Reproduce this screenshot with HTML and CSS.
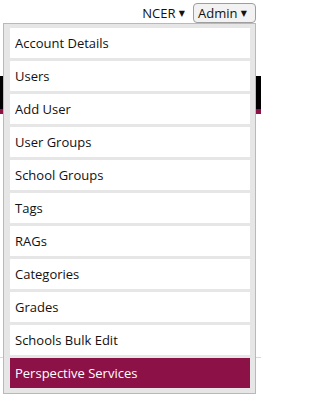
FILE: index.html
```html
<!DOCTYPE html>
<html>
<head>
<meta charset="utf-8">
<link rel="stylesheet" href="styles.css">
</head>
<body>
<div class="page">
  <div class="topnav">
    <span class="org">NCER <span class="caret">▼</span></span>
    <div class="admin-wrap">
      <span class="admin-btn">Admin <span class="caret">▼</span></span>
      <ul class="menu">
        <li class="item">Account Details</li>
        <li class="item">Users</li>
        <li class="item">Add User</li>
        <li class="item">User Groups</li>
        <li class="item">School Groups</li>
        <li class="item">Tags</li>
        <li class="item">RAGs</li>
        <li class="item">Categories</li>
        <li class="item">Grades</li>
        <li class="item">Schools Bulk Edit</li>
        <li class="item active">Perspective Services</li>
      </ul>
    </div>
  </div>
  <div class="header-bar"></div>
  <div class="header-stripe"></div>
  <div class="content"></div>
  <div class="rule"></div>
</div>
</body>
</html>
```

FILE: styles.css
```css
html, body {
  margin: 0;
  padding: 0;
  background: #fff;
}
body {
  font-family: "Open Sans", "DejaVu Sans", sans-serif;
  font-size: 13px;
  color: #111;
}
.page {
  position: relative;
  width: 261px;
  height: 398px;
  overflow: hidden;
}
.topnav {
  display: flex;
  justify-content: flex-end;
  align-items: flex-start;
  height: 76px;
  padding-right: 5px;
  box-sizing: border-box;
}
.org {
  margin-top: 4px;
  margin-right: 8px;
  line-height: 18px;
}
.caret {
  font-size: 8px;
  vertical-align: 2px;
}
.admin-btn {
  display: block;
  margin-top: 3px;
  height: 18px;
  line-height: 18px;
  padding: 0 8px 0 4px;
  border: 1px solid #9e9e9e;
  border-radius: 4px;
  background: #f2f2f2;
}
.menu {
  position: absolute;
  left: 3px;
  top: 23px;
  width: 253px;
  box-sizing: border-box;
  margin: 0;
  list-style: none;
  padding: 4px 5px 5px 6px;
  border: 1px solid #b9b9b9;
  background: #e6e6e6;
  display: flex;
  flex-direction: column;
  gap: 3px;
  z-index: 2;
}
.item {
  height: 30px;
  display: flex;
  align-items: center;
  padding-left: 5px;
  background: #fff;
}
.item.active {
  background: #8c1147;
  color: #fff;
}
.header-bar {
  height: 33px;
  background: #000;
}
.header-stripe {
  height: 5px;
  background: #8c1147;
}
.content {
  height: 243px;
}
.rule {
  height: 1px;
  background: #d9d9d9;
}
```
